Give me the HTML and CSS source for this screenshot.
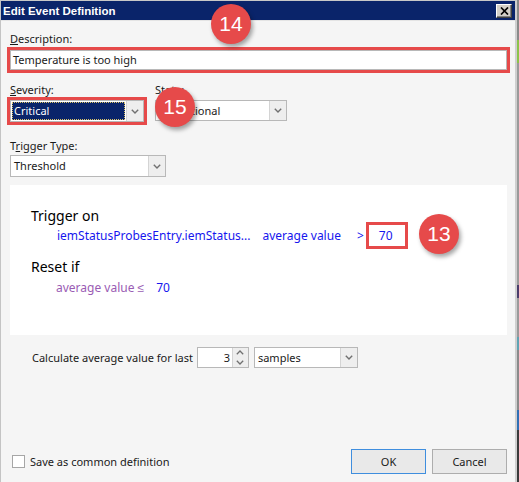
FILE: index.html
```html
<!DOCTYPE html>
<html lang="en">
<head>
    <meta charset="UTF-8">
    <meta name="viewport" content="width=device-width, initial-scale=1.0">
    <title>Edit Event Definition</title>
    <link rel="stylesheet" href="styles.css">
</head>
<body>
    <div class="dialog">
        <div class="titlebar">
            <span class="title">Edit Event Definition</span>
            <span class="close-btn">
                <svg width="9" height="8" viewBox="0 0 9 8"><path d="M1 0.5 L8 7.5 M8 0.5 L1 7.5" stroke="#000" stroke-width="1.7" fill="none"/></svg>
            </span>
        </div>

        <div class="content">
            <label class="label"><u>D</u>escription:</label>
            <div class="callout desc">
                <div class="textbox">Temperature is too high</div>
            </div>

            <div class="row">
                <div class="field">
                    <label class="label"><u>S</u>everity:</label>
                    <div class="callout sev">
                        <div class="combo severity">
                            <span class="combo-text selected">Critical</span>
                            <span class="combo-btn"><svg width="8" height="5" viewBox="0 0 8 5"><path d="M0.8 0.8 L4 4 L7.2 0.8" stroke="#707070" stroke-width="1.4" fill="none"/></svg></span>
                        </div>
                    </div>
                </div>
                <div class="field state-field">
                    <label class="label">State:</label>
                    <div class="combo state">
                        <span class="combo-text">Operational</span>
                        <span class="combo-btn"><svg width="8" height="5" viewBox="0 0 8 5"><path d="M0.8 0.8 L4 4 L7.2 0.8" stroke="#707070" stroke-width="1.4" fill="none"/></svg></span>
                    </div>
                </div>
            </div>

            <label class="label trigger-label">T<u>r</u>igger Type:</label>
            <div class="combo trigger">
                <span class="combo-text">Threshold</span>
                <span class="combo-btn"><svg width="8" height="5" viewBox="0 0 8 5"><path d="M0.8 0.8 L4 4 L7.2 0.8" stroke="#707070" stroke-width="1.4" fill="none"/></svg></span>
            </div>

            <div class="panel">
                <div class="panel-title">Trigger on</div>
                <div class="cond">
                    <span>iemStatusProbesEntry.iemStatus...</span>
                    <span class="agg">average value</span>
                    <span class="op">&gt;</span>
                    <span class="value-box">70</span>
                </div>
                <div class="panel-title reset-title">Reset if</div>
                <div class="cond reset">
                    <span class="reset-text">average value &le;</span>
                    <span class="reset-value">70</span>
                </div>
            </div>

            <div class="calc-row">
                <span>Calculate average value for last</span>
                <div class="spinner">
                    <span class="spin-value">3</span>
                    <span class="spin-btns">
                        <svg width="8" height="5" viewBox="0 0 8 5"><path d="M0.8 4.2 L4 1 L7.2 4.2" stroke="#707070" stroke-width="1.3" fill="none"/></svg>
                        <svg width="8" height="5" viewBox="0 0 8 5"><path d="M0.8 0.8 L4 4 L7.2 0.8" stroke="#707070" stroke-width="1.3" fill="none"/></svg>
                    </span>
                </div>
                <div class="combo samples">
                    <span class="combo-text">samples</span>
                    <span class="combo-btn"><svg width="8" height="5" viewBox="0 0 8 5"><path d="M0.8 0.8 L4 4 L7.2 0.8" stroke="#707070" stroke-width="1.4" fill="none"/></svg></span>
                </div>
            </div>

            <div class="footer">
                <span class="checkbox"></span>
                <span class="check-label">Save as common definition</span>
                <button class="btn btn-ok">OK</button>
                <button class="btn">Cancel</button>
            </div>
        </div>

        <!-- numbered callouts -->
        <span class="badge badge-14">14</span>
        <span class="badge badge-15">15</span>
        <span class="badge badge-13">13</span>
    </div>
</body>
</html>
```

FILE: styles.css
```css
body {
    margin: 0;
    width: 519px;
    height: 482px;
    overflow: hidden;
    font-family: "Noto Sans", sans-serif;
    font-size: 11px;
    color: #1a1a1a;
    background: linear-gradient(to bottom,
        #8a8a8a 0, #8a8a8a 40px,
        #8cc34b 40px, #8cc34b 63px,
        #9a9a9a 63px, #9a9a9a 285px,
        #4b3d6b 285px, #4b3d6b 298px,
        #9a9a9a 298px, #9a9a9a 337px,
        #5fa3b3 337px, #5fa3b3 350px,
        #8a8a8a 350px, #8a8a8a 410px,
        #2f6fb5 410px, #2f6fb5 430px,
        #3a3a3a 430px);
}
.dialog {
    position: relative;
    box-sizing: border-box;
    width: 517px;
    height: 482px;
    background: #f5f5f5;
    border-top: 1px solid #c8c8c8;
    border-left: 1px solid #c4c4c4;
    border-right: 2px solid #cfcfcf;
    display: flex;
    flex-direction: column;
}
.titlebar {
    height: 19px;
    padding: 0 3px 0 2px;
    background: #0a246a;
    border-bottom: 1px solid #e4e4e4;
    display: flex;
    align-items: center;
    justify-content: space-between;
}
.title {
    font-family: "Liberation Sans", Arial, sans-serif;
    font-weight: bold;
    font-size: 11.5px;
    color: #fff;
}
.close-btn {
    box-sizing: border-box;
    width: 16px;
    height: 14px;
    background: #d4d0c8;
    border: 1px solid;
    border-color: #fff #404040 #404040 #fff;
    box-shadow: inset -1px -1px #808080;
    display: flex;
    align-items: center;
    justify-content: center;
}
.content {
    flex: 1;
    display: flex;
    flex-direction: column;
    padding: 11px 8px 8px 9px;
}
.label {
    display: block;
    height: 14px;
    line-height: 14px;
}
.callout {
    border: 3px solid #e64a4a;
}
.callout.desc {
    margin: 1px -3px 0;
}
.callout.sev {
    margin-left: -3px;
    align-self: flex-start;
}
.textbox {
    box-sizing: border-box;
    height: 20px;
    padding-left: 2px;
    line-height: 18px;
    background: #fff;
    border: 1px solid #b8b8b8;
}
.row {
    display: flex;
    margin-top: 10px;
}
.field {
    display: flex;
    flex-direction: column;
}
.state-field {
    margin-left: 8px;
}
.combo {
    box-sizing: border-box;
    height: 22px;
    background: #fff;
    border: 1px solid #b8b8b8;
    display: flex;
}
.combo-text {
    flex: 1;
    padding-left: 3px;
    line-height: 20px;
    white-space: nowrap;
    overflow: hidden;
}
.combo-text.selected {
    margin: 1px;
    padding-left: 2px;
    line-height: 18px;
    background: #0a246a;
    color: #fff;
    outline: 1px dotted #d9c36a;
    outline-offset: -1px;
}
.combo-btn {
    width: 16px;
    background: #eeeeee;
    border-left: 1px solid #d4d4d4;
    display: flex;
    align-items: center;
    justify-content: center;
}
.severity {
    width: 134px;
}
.state {
    width: 132px;
    margin-top: 3px;
    height: 21px;
}
.trigger-label {
    margin-top: 14px;
}
.trigger {
    width: 156px;
    margin-top: 2px;
}
.panel {
    margin-top: 8px;
    height: 150px;
    box-sizing: border-box;
    padding: 23px 0 0 21px;
    background: #fff;
}
.panel-title {
    font-size: 14px;
    line-height: 16px;
    color: #000;
}
.reset-title {
    margin-top: 10px;
}
.cond {
    display: flex;
    align-items: center;
    height: 27px;
    margin-top: -2px;
    padding-left: 26px;
    font-size: 12px;
    color: #1616ee;
}
.agg {
    margin-left: 12px;
}
.op {
    margin-left: 16px;
}
.value-box {
    box-sizing: border-box;
    width: 42px;
    height: 27px;
    margin-left: 2px;
    padding-left: 10px;
    line-height: 21px;
    background: #fff;
    border: 3px solid #e64a4a;
}
.cond.reset {
    height: 16px;
    margin-top: 4px;
    padding-left: 25px;
}
.reset-text {
    color: #9a5cb4;
}
.reset-value {
    margin-left: 12px;
}
.calc-row {
    display: flex;
    align-items: center;
    height: 21px;
    margin-top: 12px;
    padding-left: 22px;
}
.spinner {
    box-sizing: border-box;
    width: 52px;
    height: 21px;
    margin-left: 4px;
    background: #fff;
    border: 1px solid #b8b8b8;
    display: flex;
}
.spin-value {
    flex: 1;
    text-align: right;
    padding-right: 2px;
    line-height: 19px;
}
.spin-btns {
    width: 15px;
    background: #eeeeee;
    border-left: 1px solid #d4d4d4;
    display: flex;
    flex-direction: column;
    align-items: center;
    justify-content: space-around;
}
.samples {
    width: 104px;
    height: 21px;
    margin-left: 5px;
}
.samples .combo-text {
    line-height: 19px;
}
.footer {
    margin-top: auto;
    height: 25px;
    display: flex;
    align-items: center;
}
.checkbox {
    box-sizing: border-box;
    width: 13px;
    height: 13px;
    margin-left: 2px;
    background: #fff;
    border: 1px solid #a6a6a6;
}
.check-label {
    margin-left: 5px;
}
.btn {
    box-sizing: border-box;
    width: 75px;
    height: 25px;
    margin-left: 6px;
    padding: 0;
    font-family: "Noto Sans", sans-serif;
    font-size: 11px;
    color: #1a1a1a;
    background: #e9e9e9;
    border: 1px solid #adadad;
}
.btn-ok {
    margin-left: auto;
    border-color: #3f8ede;
}
.badge {
    position: absolute;
    width: 40px;
    height: 40px;
    border-radius: 50%;
    background: #e64a4a;
    color: #fff;
    font-family: "Liberation Sans", Arial, sans-serif;
    font-size: 21px;
    line-height: 40px;
    text-align: center;
    box-shadow: 2px 3px 4px rgba(0, 0, 0, 0.35);
}
.badge-14 {
    left: 210px;
    top: 3px;
}
.badge-15 {
    left: 154px;
    top: 86px;
}
.badge-13 {
    left: 418px;
    top: 213px;
}
```
